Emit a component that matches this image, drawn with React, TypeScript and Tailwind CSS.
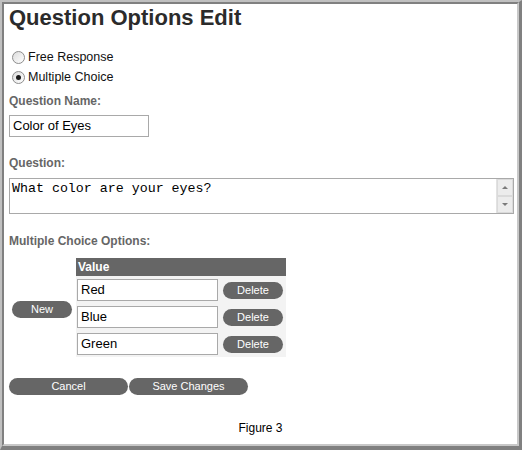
import React from "react";

const OPTIONS = ["Red", "Blue", "Green"];

function Radio({ checked, label }: { checked?: boolean; label: string }) {
  return (
    <div className="flex items-center h-[20px] pl-[3px]">
      <span className="w-[13px] h-[13px] rounded-full border border-[#8d8d8d] bg-gradient-to-br from-[#dcdcdc] to-white flex items-center justify-center">
        {checked && <span className="w-[5px] h-[5px] rounded-full bg-[#1a1a1a]" />}
      </span>
      <span className="ml-[3px] text-[12.5px] text-[#111]">{label}</span>
    </div>
  );
}

function PillButton({ label, className }: { label: string; className?: string }) {
  return (
    <button
      className={
        "h-[17px] rounded-full bg-[#666666] text-white text-[11px] leading-[17px] text-center " +
        (className ?? "")
      }
    >
      {label}
    </button>
  );
}

export default function App() {
  return (
    <div className="w-[522px] h-[450px] bg-white font-['Liberation_Sans',Arial,sans-serif]">
      <div className="w-full h-full border-l-2 border-t-2 border-r-[3px] border-b-[4px] border-l-[#c0c0c0] border-t-[#c0c0c0] border-r-[#808080] border-b-[#808080]">
        <div className="w-full h-full border-l-2 border-t-2 border-r-2 border-b-2 border-l-[#808080] border-t-[#808080] border-r-[#c8c8c8] border-b-[#c8c8c8] pl-[5px]">
          {/* Title */}
          <h1 className="h-[28px] leading-[28px] text-[22px] font-bold text-[#2b2b2b]">
            Question Options Edit
          </h1>

          {/* Type */}
          <div className="mt-[15px]">
            <Radio label="Free Response" />
            <Radio label="Multiple Choice" checked />
          </div>

          <div className="mt-[7px] h-[14px] leading-[14px] text-[12px] font-bold text-[#666]">
            Question Name:
          </div>
          <div className="mt-[7px] w-[140px] h-[22px] border border-[#a9a9a9] px-[3px] text-[13px] leading-[20px] text-black">
            Color of Eyes
          </div>

          <div className="mt-[19px] h-[14px] leading-[14px] text-[12px] font-bold text-[#666]">
            Question:
          </div>
          <div className="mt-[8px] w-[505px] h-[36px] border border-[#a9a9a9] flex">
            <div className="flex-1 px-[2px] pt-[2px] font-['Liberation_Mono','Courier_New',monospace] text-[13.3px] leading-[15px] text-black">
              What color are your eyes?
            </div>
            <div className="w-[17px] flex flex-col bg-[#f0f0f0] border-l border-[#e2e2e2]">
              <div className="h-[17px] flex items-center justify-center border border-[#dadada] bg-[#ececec]">
                <span className="w-0 h-0 border-l-[3px] border-r-[3px] border-b-[3px] border-l-transparent border-r-transparent border-b-[#7a7a7a]" />
              </div>
              <div className="flex-1" />
              <div className="h-[17px] flex items-center justify-center border border-[#dadada] bg-[#ececec]">
                <span className="w-0 h-0 border-l-[3px] border-r-[3px] border-t-[3px] border-l-transparent border-r-transparent border-t-[#7a7a7a]" />
              </div>
            </div>
          </div>

          <div className="mt-[20px] h-[14px] leading-[14px] text-[12px] font-bold text-[#666]">
            Multiple Choice Options:
          </div>

          {/* Options table */}
          <div className="mt-[10px] flex items-center">
            <div className="w-[67px] pl-[3px]">
              <PillButton label="New" className="w-[60px] h-[16px] leading-[16px]" />
            </div>
            <div className="w-[210px] bg-[#f3f3f3]">
              <div className="h-[18px] bg-[#666666] text-white text-[12px] font-bold leading-[18px] pl-[2px]">
                Value
              </div>
              <div className="pt-[3px] pb-[2px] flex flex-col gap-[5px]">
                {OPTIONS.map((o) => (
                  <div key={o} className="flex items-center h-[22px] pl-[1px]">
                    <div className="w-[141px] h-[22px] border border-[#a9a9a9] bg-white px-[3px] text-[13px] leading-[20px] text-black">
                      {o}
                    </div>
                    <PillButton label="Delete" className="ml-[5px] w-[60px] h-[16px] leading-[16px]" />
                  </div>
                ))}
              </div>
            </div>
          </div>

          <div className="mt-[21px] flex">
            <PillButton label="Cancel" className="w-[119px]" />
            <PillButton label="Save Changes" className="w-[119px] ml-[1px]" />
          </div>

          <div className="mt-[24px] pr-[5px] text-center text-[12px] text-black">
            Figure 3
          </div>
        </div>
      </div>
    </div>
  );
}
